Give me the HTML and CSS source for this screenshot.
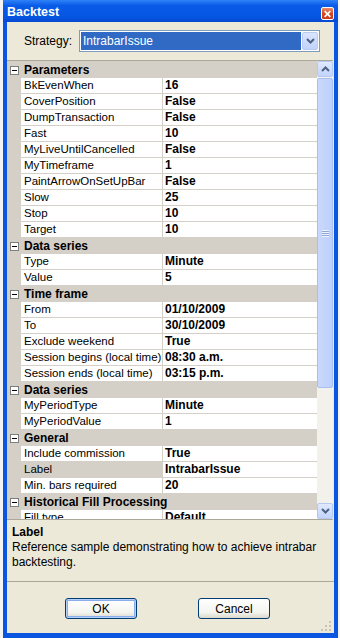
FILE: index.html
```html
<!DOCTYPE html>
<html>
	<head>
		<meta charset="utf-8">
		<title>Backtest</title>
		<link rel="stylesheet" href="styles.css">
	</head>
	<body>
		<div class="window">
			<div class="titlebar">
				<span class="title">Backtest</span>
				<span class="close">
					<svg width="12" height="12" viewBox="0 0 12 12"><path d="M3.5 3.5 L8.5 8.5 M8.5 3.5 L3.5 8.5" stroke="#fff" stroke-width="1.8" stroke-linecap="square"/></svg>
				</span>
			</div>
			<div class="client">
				<div class="strategy">
					<span class="strategy-label">Strategy:</span>
					<div class="combo">
						<span class="combo-text">IntrabarIssue</span>
						<span class="combo-btn">
							<svg width="9" height="6" viewBox="0 0 9 6"><path d="M1 1 L4.5 4.5 L8 1" fill="none" stroke="#4d6185" stroke-width="2"/></svg>
						</span>
					</div>
				</div>
				<div class="grid">
					<div class="rows">
						<div class="cat"><span class="box"></span><span>Parameters</span></div>
						<div class="prop"><span class="name">BkEvenWhen</span><span class="val">16</span></div>
						<div class="prop"><span class="name">CoverPosition</span><span class="val">False</span></div>
						<div class="prop"><span class="name">DumpTransaction</span><span class="val">False</span></div>
						<div class="prop"><span class="name">Fast</span><span class="val">10</span></div>
						<div class="prop"><span class="name">MyLiveUntilCancelled</span><span class="val">False</span></div>
						<div class="prop"><span class="name">MyTimeframe</span><span class="val">1</span></div>
						<div class="prop"><span class="name">PaintArrowOnSetUpBar</span><span class="val">False</span></div>
						<div class="prop"><span class="name">Slow</span><span class="val">25</span></div>
						<div class="prop"><span class="name">Stop</span><span class="val">10</span></div>
						<div class="prop"><span class="name">Target</span><span class="val">10</span></div>
						<div class="cat"><span class="box"></span><span>Data series</span></div>
						<div class="prop"><span class="name">Type</span><span class="val">Minute</span></div>
						<div class="prop"><span class="name">Value</span><span class="val">5</span></div>
						<div class="cat"><span class="box"></span><span>Time frame</span></div>
						<div class="prop"><span class="name">From</span><span class="val">01/10/2009</span></div>
						<div class="prop"><span class="name">To</span><span class="val">30/10/2009</span></div>
						<div class="prop"><span class="name">Exclude weekend</span><span class="val">True</span></div>
						<div class="prop"><span class="name">Session begins (local time)</span><span class="val">08:30 a.m.</span></div>
						<div class="prop"><span class="name">Session ends (local time)</span><span class="val">03:15 p.m.</span></div>
						<div class="cat"><span class="box"></span><span>Data series</span></div>
						<div class="prop"><span class="name">MyPeriodType</span><span class="val">Minute</span></div>
						<div class="prop"><span class="name">MyPeriodValue</span><span class="val">1</span></div>
						<div class="cat"><span class="box"></span><span>General</span></div>
						<div class="prop"><span class="name">Include commission</span><span class="val">True</span></div>
						<div class="prop selected"><span class="name">Label</span><span class="val">IntrabarIssue</span></div>
						<div class="prop"><span class="name">Min. bars required</span><span class="val">20</span></div>
						<div class="cat"><span class="box"></span><span>Historical Fill Processing</span></div>
						<div class="prop"><span class="name">Fill type</span><span class="val">Default</span></div>
					</div>
					<div class="scroll">
						<span class="sbtn">
							<svg width="9" height="6" viewBox="0 0 9 6"><path d="M1 5 L4.5 1.5 L8 5" fill="none" stroke="#4d6185" stroke-width="2"/></svg>
						</span>
						<div class="track">
							<span class="thumb"><span class="grip-lines"></span></span>
						</div>
						<span class="sbtn">
							<svg width="9" height="6" viewBox="0 0 9 6"><path d="M1 1 L4.5 4.5 L8 1" fill="none" stroke="#4d6185" stroke-width="2"/></svg>
						</span>
					</div>
				</div>
				<div class="desc">
					<div class="desc-title">Label</div>
					<div class="desc-text">Reference sample demonstrating how to achieve intrabar backtesting.</div>
				</div>
				<div class="buttons">
					<button class="btn default">OK</button>
					<button class="btn">Cancel</button>
				</div>
				<svg class="sizegrip" width="11" height="11" viewBox="0 0 11 11">
					<rect x="8" y="0" width="2" height="2" fill="#c8c3b3"/>
					<rect x="4" y="4" width="2" height="2" fill="#c8c3b3"/>
					<rect x="8" y="4" width="2" height="2" fill="#c8c3b3"/>
					<rect x="0" y="8" width="2" height="2" fill="#c8c3b3"/>
					<rect x="4" y="8" width="2" height="2" fill="#c8c3b3"/>
					<rect x="8" y="8" width="2" height="2" fill="#c8c3b3"/>
				</svg>
			</div>
		</div>
	</body>
</html>
```

FILE: styles.css
```css
*{margin: 0; padding: 0; box-sizing: border-box;}
body{width: 340px; height: 638px; overflow: hidden; background: #f4f4f4;
font-family: "Liberation Sans", Arial, sans-serif; font-size: 12px; color: #000;}

.window{margin-left: 3px; width: 335px; height: 638px; display: flex; flex-direction: column;
background: #0a56e0;}
.titlebar{height: 22px; display: flex; align-items: center; justify-content: space-between;
padding: 0 4px 0 4px;
background: linear-gradient(#2f82f7, #0a5ce8 25%, #0556e3 75%, #0749cf);}
.title{color: #fff; font-weight: bold; font-size: 12.5px; padding-top: 2px;}
.close{width: 13px; height: 13px; margin-top: 4px; border: 1px solid #fff; border-radius: 2px;
background: linear-gradient(#e98a6c, #d9491f 50%, #c8391a); display: flex;}

.client{position: relative; flex: 1; margin: 0 4px 5px 4px; background: #ece9d8;
display: flex; flex-direction: column;}

.strategy{height: 38px; display: flex; align-items: center; padding-left: 17px;}
.strategy-label{width: 55px;}
.combo{width: 241px; height: 22px; border: 1px solid #7f9db9; background: #fff; padding: 1px;
display: flex;}
.combo-text{flex: 1; background: #316ac5; color: #fff; line-height: 18px; padding-left: 2px;}
.combo-btn{width: 16px; margin-left: 1px; border: 1px solid #b9cbf3; border-radius: 2px;
background: linear-gradient(#dbe6fe, #c1d3fb); display: flex; align-items: center; justify-content: center;}

.grid{height: 460px; margin-right: 1px; display: flex; border-top: 1px solid #aca899;
border-bottom: 1px solid #aca899; background: #d4d0c8;}
.rows{flex: 1; overflow: hidden; padding-top: 1px;}
.cat{height: 16px; display: flex; align-items: center; font-weight: bold; background: #d4d0c8;}
.cat .box{width: 9px; height: 9px; margin: 0 5px 0 3px; border: 1px solid #7f7f7f; background: #fff;
position: relative;}
.cat .box::after{content: ""; position: absolute; left: 1px; top: 3px; width: 5px; height: 1px; background: #000;}
.prop{height: 16px; display: flex; padding-left: 14px;}
.prop .name{width: 142px; background: #fff; border-right: 1px solid #d4d0c8; border-bottom: 1px solid #d4d0c8;
padding-left: 3px; line-height: 15px; font-size: 11.5px; white-space: nowrap; overflow: hidden;}
.prop .val{flex: 1; background: #fff; border-bottom: 1px solid #d4d0c8; padding-left: 2px;
line-height: 15px; font-weight: bold; white-space: nowrap;}
.prop.selected .name{background: #d4d0c8;}

.scroll{width: 16px; display: flex; flex-direction: column; background: #f3f1ec;}
.sbtn{height: 16px; border: 1px solid #b5c8f2; border-radius: 2px;
background: linear-gradient(#e0e9fe, #c3d4fb); display: flex; align-items: center; justify-content: center;}
.track{flex: 1; padding-top: 1px;}
.thumb{display: flex; align-items: center; justify-content: center; height: 310px;
border: 1px solid #a9bff0; border-radius: 2px; background: linear-gradient(90deg, #c9d8fc, #bdd0fb);}
.grip-lines{width: 7px; height: 7px;
background: repeating-linear-gradient(#eef3ff 0 1px, #8ea6dc 1px 2px);}

.desc{height: 62px; padding: 5px 5px 0 5px; border-bottom: 1px solid #aca899;}
.desc-title{font-weight: bold; line-height: 14px;}
.desc-text{line-height: 15px; padding-top: 1px;}

.buttons{padding: 16px 0 0 58px; display: flex; gap: 61px;}
.btn{width: 72px; height: 21px; font-family: "Liberation Sans", Arial, sans-serif; font-size: 12px;
border: 1px solid #003c74; border-radius: 3px;
background: linear-gradient(#ffffff, #f4f4f0 70%, #dcd8cc);}
.btn.default{box-shadow: inset 0 0 0 1px #b8d0f8, inset 0 0 0 2px #89adeb;}

.sizegrip{position: absolute; right: 2px; bottom: 1px;}
```
